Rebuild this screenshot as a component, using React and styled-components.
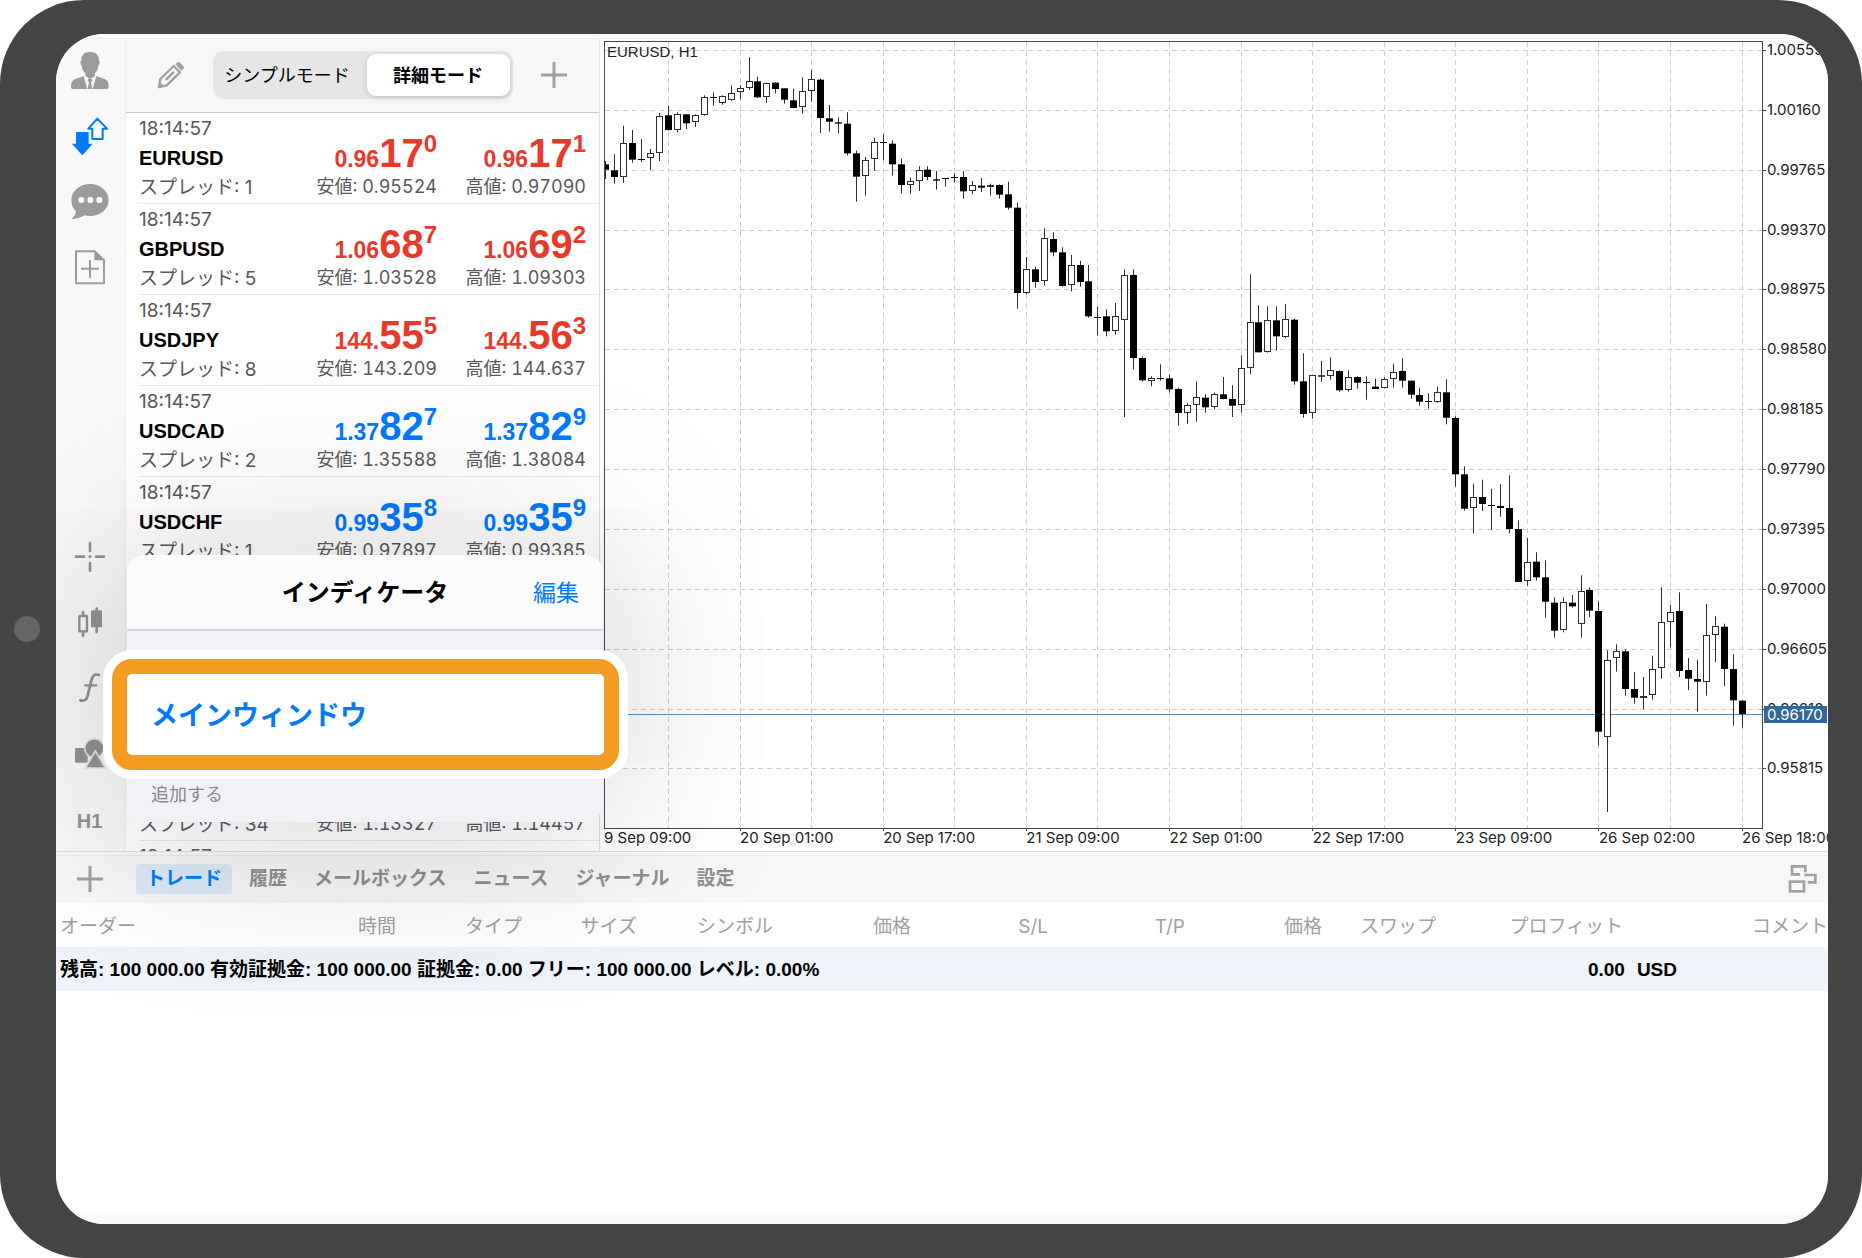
import React from "react";
import styled, { createGlobalStyle } from "styled-components";

const uiFont = `Inter, "Noto Sans CJK JP", sans-serif`;
const helvetica = `"Liberation Sans", "Noto Sans CJK JP", sans-serif`;
const gray = "#9b9b99";
const blue = "#007aff";
const red = "#e8392a";

const quotes = [
  { time: "18:14:57", symbol: "EURUSD", spread: "1", color: red, bid: ["0.96", "17", "0"], ask: ["0.96", "17", "1"], low: "0.95524", high: "0.97090" },
  { time: "18:14:57", symbol: "GBPUSD", spread: "5", color: red, bid: ["1.06", "68", "7"], ask: ["1.06", "69", "2"], low: "1.03528", high: "1.09303" },
  { time: "18:14:57", symbol: "USDJPY", spread: "8", color: red, bid: ["144.", "55", "5"], ask: ["144.", "56", "3"], low: "143.209", high: "144.637" },
  { time: "18:14:57", symbol: "USDCAD", spread: "2", color: blue, bid: ["1.37", "82", "7"], ask: ["1.37", "82", "9"], low: "1.35588", high: "1.38084" },
  { time: "18:14:57", symbol: "USDCHF", spread: "1", color: blue, bid: ["0.99", "35", "8"], ask: ["0.99", "35", "9"], low: "0.97897", high: "0.99385" },
  {},
  {},
  { spread: "34", low: "1.13327", high: "1.14457" },
  { time: "18:14:57" },
];

// high, body top, body bottom, low in thirds of a unit, then f = falling, h = rising, d = flat
const candles = `483 493 509 537 f|463 511 531 551 f|377 429 530 548 h|390 429 479 488 f|417 478 478 486 d|447 460 476 510 h
339 349 461 483 h|317 346 390 392 f|337 343 390 397 h|342 343 370 387 f|343 346 368 381 h|286 292 345 347 h
277 293 293 317 d|286 289 311 314 h|256 280 301 302 h|256 265 277 298 h|172 244 265 270 h|230 244 292 294 f
248 250 292 309 h|247 248 267 280 f|265 265 299 311 f|266 301 324 325 f|232 273 320 340 h|210 239 274 305 h
236 239 354 399 f|315 355 365 395 f|352 367 371 400 f|337 371 460 466 f|452 460 530 605 f|471 482 530 587 h
413 427 478 513 h|403 428 428 480 d|421 431 493 527 f|476 493 555 580 f|533 545 557 581 h|499 511 544 573 h
499 509 531 541 f|513 538 542 569 f|535 535 535 560 d|520 532 532 548 d|513 531 574 596 f|543 557 574 583 h
534 557 563 576 f|551 556 562 587 h|553 555 584 596 f|545 583 623 629 f|608 623 879 926 f|771 808 881 883 h
800 808 846 863 f|685 715 843 857 h|697 717 757 769 f|742 757 858 860 f|765 796 857 874 h|782 795 846 860 f
795 844 949 953 f|921 952 952 1007 d|928 949 994 1009 f|909 948 994 1004 h|808 826 962 1251 h|808 825 1074 1108 f
1070 1074 1141 1145 f|1129 1135 1145 1159 h|1093 1136 1136 1142 d|1124 1135 1168 1178 f|1163 1167 1239 1276 f|1210 1216 1240 1271 h
1144 1192 1217 1265 h|1183 1193 1222 1238 f|1178 1182 1222 1228 h|1131 1183 1197 1198 f|1156 1197 1217 1251 f|1066 1105 1217 1238 h
823 967 1106 1123 h|916 967 1057 1057 f|919 961 1057 1058 h|919 961 1009 1052 f|912 958 1013 1015 h|955 959 1144 1154 f
1060 1144 1242 1253 f|1124 1127 1242 1256 h|1083 1126 1130 1145 f|1072 1111 1130 1139 h|1111 1113 1171 1175 f|1111 1132 1171 1175 h
1128 1131 1148 1166 f|1129 1147 1147 1199 d|1136 1160 1167 1167 f|1132 1137 1163 1165 h|1091 1116 1137 1163 h|1075 1113 1142 1163 f
1142 1142 1184 1196 f|1163 1185 1205 1217 f|1180 1203 1206 1226 f|1160 1176 1206 1208 h|1138 1177 1253 1273 f|1249 1254 1423 1460 f
1399 1423 1526 1532 f|1451 1491 1523 1600 h|1439 1491 1512 1533 f|1466 1516 1516 1590 d|1452 1518 1524 1550 f|1426 1524 1587 1600 f
1561 1587 1746 1746 f|1614 1686 1742 1757 h|1657 1685 1732 1742 f|1681 1732 1805 1853 f|1792 1808 1892 1913 f|1792 1807 1892 1897 h
1785 1808 1819 1823 f|1726 1773 1871 1913 h|1762 1770 1832 1851 f|1804 1833 2195 2237 f|1951 1981 2213 2436 h|1933 1954 1976 2015 h
1948 1954 2067 2087 f|2016 2067 2093 2111 f|2031 2089 2093 2128 h|1967 2007 2085 2099 h|1762 1867 2004 2036 h|1815 1836 1865 1942 h
1777 1833 2013 2031 f|1974 2010 2036 2070 f|1979 2037 2045 2135 f|1812 1906 2048 2087 h|1849 1880 1907 1986 h|1871 1880 2007 2058 f
1963 2007 2101 2177 f|2101 2102 2142 2183 f`
  .split(/[|\n]/)
  .map((row) => {
    const [high, top, bottom, low, kind] = row.trim().split(" ");
    return { high: +high, top: +top, bottom: +bottom, low: +low, kind };
  });

const prices = ["1.00555", "1.00160", "0.99765", "0.99370", "0.98975", "0.98580", "0.98185", "0.97790", "0.97395", "0.97000", "0.96605", "0.96210", "0.95815"];
const times = ["20 Sep 01:00", "20 Sep 17:00", "21 Sep 09:00", "22 Sep 01:00", "22 Sep 17:00", "23 Sep 09:00", "26 Sep 02:00", "26 Sep 18:00"];

const candleX = (i) => 5.9 + i * 8.946;
const scaleY = (v) => (v - 117) / 3;
const gridY = (k) => Math.round(11 + k * 59.87) + 0.5;
const crisp = (v) => Math.round(v - 0.5) + 0.5;

const tabs = ["トレード", "履歴", "メールボックス", "ニュース", "ジャーナル", "設定"];
const columnWidths = [80, 260, 126, 115, 136, 138, 137, 137, 137, 114, 187, 205];
const columnNames = ["オーダー", "時間", "タイプ", "サイズ", "シンボル", "価格", "S/L", "T/P", "価格", "スワップ", "プロフィット", "コメント"];

function Chart() {
  return (
    <ChartSvg viewBox="0 0 1228 812" role="img" aria-label="EURUSD, H1">
      <defs>
        <clipPath id="plot">
          <rect x="5" y="3" width="1158" height="786" />
        </clipPath>
      </defs>
      <g stroke="#cfcfcf" strokeDasharray="5 4">
        {prices.map((p, k) => (
          <line key={p} x1="5" x2="1163" y1={gridY(k)} y2={gridY(k)} />
        ))}
        {Array.from({ length: 16 }, (_, n) => (
          <line key={n} y1="3" y2="789" x1={crisp(candleX(7 + n * 8))} x2={crisp(candleX(7 + n * 8))} />
        ))}
      </g>
      <line x1="5" x2="1163" y1="675.5" y2="675.5" stroke="#5b8dbb" />
      <g clipPath="url(#plot)">
        {candles.map((c, i) => {
          const x = crisp(candleX(i));
          const top = scaleY(c.top);
          const height = Math.max(scaleY(c.bottom) - top, 1);
          return (
            <g key={i}>
              <line x1={x} x2={x} y1={scaleY(c.high)} y2={scaleY(c.low)} stroke="#2e2e2e" />
              {c.kind === "h" && (
                <rect x={x - 3} y={crisp(top)} width="6" height={Math.max(Math.round(height - 1), 1)} fill="#fff" stroke="#2e2e2e" />
              )}
              {c.kind === "f" && <rect x={x - 3.5} y={top} width="7" height={height} />}
              {c.kind === "d" && <line x1={x - 3.5} x2={x + 3.5} y1={crisp(top)} y2={crisp(top)} stroke="#000" />}
            </g>
          );
        })}
      </g>
      <rect x="4.5" y="2.5" width="1158" height="787" fill="none" stroke="#4a4a4a" />
      {prices.map((p, k) => (
        <g key={p}>
          <line x1="1163" x2="1166" y1={gridY(k)} y2={gridY(k)} stroke="#4a4a4a" />
          <AxisText x="1167" y={gridY(k) + 4.5}>{p}</AxisText>
        </g>
      ))}
      <rect x="1164" y="667" width="63" height="17" fill="#336699" />
      <AxisText x="1167" y="681" $light>0.96170</AxisText>
      <AxisText x="4" y="804">9 Sep 09:00</AxisText>
      {times.map((t, n) => (
        <g key={t}>
          <line x1={crisp(candleX(15 + n * 16))} x2={crisp(candleX(15 + n * 16))} y1="789" y2="792" stroke="#4a4a4a" />
          <AxisText x={candleX(15 + n * 16)} y="804">{t}</AxisText>
        </g>
      ))}
      <ChartTitle x="7" y="18">EURUSD, H1</ChartTitle>
    </ChartSvg>
  );
}

function Price({ parts }) {
  return (
    <PriceLine>
      <Small>{parts[0]}</Small>
      <Big>{parts[1]}</Big>
      <Sup>{parts[2]}</Sup>
    </PriceLine>
  );
}

function Quote({ data }) {
  return (
    <QuoteRow>
      <QuoteCell>
        <Muted>{data.time}</Muted>
        <Symbol>{data.symbol}</Symbol>
        {data.spread && <Muted>スプレッド: {data.spread}</Muted>}
      </QuoteCell>
      <QuoteSide $color={data.color}>
        {data.bid && <Price parts={data.bid} />}
        {data.low && <Extreme>安値: {data.low}</Extreme>}
      </QuoteSide>
      <QuoteSide $color={data.color}>
        {data.ask && <Price parts={data.ask} />}
        {data.high && <Extreme>高値: {data.high}</Extreme>}
      </QuoteSide>
    </QuoteRow>
  );
}

function App() {
  return (
    <Device>
      <GlobalStyle />
      <Bezel>
        <Camera />
      </Bezel>
      <Screen>
        <TopStrip />
        <Workspace>
          <Sidebar>
            <IconGroup>
              <IconButton aria-label="アカウント">
                <Icon viewBox="0 0 120 120">
                  <path d="M60 6C42 6 34 15 34 32c-4 1-4 9 1 15 1 12 7 18 11 23v8l14 9 15-9v-8c4-5 9-11 10-23 5-6 5-14 2-15C87 15 78 6 60 6z" />
                  <path d="M42 78 14 88C6 92 3 100 3 112q0 5 5 5h44L42 82zM78 78l28 10c8 4 10 12 10 24q0 5-5 5H68l10-35z" />
                  <path d="M54 87h12l1 6-4 4 4 20H53l4-20-4-4z" />
                </Icon>
              </IconButton>
              <IconButton aria-label="気配値" $active>
                <Icon viewBox="0 0 120 120">
                  <path d="M18 50q0-2 2-2h34q2 0 2 2v33h12L40 115q-3 3-6 0L6 83h12z" />
                  <path d="M82 8 55 38h12v31h31V38h13z" fill="none" stroke="currentColor" strokeWidth="6" strokeLinejoin="round" />
                </Icon>
              </IconButton>
              <IconButton aria-label="チャット">
                <Icon viewBox="0 0 120 120">
                  <path d="M60 6c31 0 56 21 56 48s-25 48-56 48c-6 0-11-1-16-2-12 7-25 11-40 11 8-6 13-13 14-23C9 80 4 68 4 54 4 27 29 6 60 6z" />
                  <g fill="#fff">
                    <circle cx="34" cy="54" r="9" />
                    <circle cx="61" cy="54" r="9" />
                    <circle cx="88" cy="54" r="9" />
                  </g>
                </Icon>
              </IconButton>
              <IconButton aria-label="新規注文">
                <Icon viewBox="0 0 120 120">
                  <path d="M18 10h56l28 27v69H18z" fill="none" stroke="currentColor" strokeWidth="6" strokeLinejoin="round" />
                  <path d="M73 9v28h29z" />
                  <path d="M60 36v53M33 62h54" stroke="currentColor" strokeWidth="6" />
                </Icon>
              </IconButton>
            </IconGroup>
            <IconGroup>
              <IconButton aria-label="クロスヘア" $dark>
                <Icon viewBox="0 0 120 120">
                  <path d="M60 18v24M60 78v23M18 59h24M78 59h24M59 59h2" stroke="currentColor" strokeWidth="8" strokeLinecap="round" />
                </Icon>
              </IconButton>
              <IconButton aria-label="チャートの種類" $dark>
                <Icon viewBox="0 0 120 120">
                  <rect x="28" y="39" width="23" height="46" rx="1" fill="none" stroke="currentColor" strokeWidth="7" />
                  <path d="M39 27v10M39 87v12M80 17v70" stroke="currentColor" strokeWidth="8" strokeLinecap="round" />
                  <rect x="63" y="22" width="33" height="51" rx="4" />
                </Icon>
              </IconButton>
              <IconButton aria-label="インディケータ" $dark>
                <Icon viewBox="0 0 120 120">
                  <path d="M87 18c-14-5-20 3-23 16L53 80c-3 13-9 17-22 14" fill="none" stroke="currentColor" strokeWidth="8" strokeLinecap="round" />
                  <path d="M46 49h33" stroke="currentColor" strokeWidth="7" strokeLinecap="round" />
                </Icon>
              </IconButton>
              <IconButton aria-label="オブジェクト" $dark>
                <Icon viewBox="0 0 120 120">
                  <rect x="15" y="39" width="38" height="44" rx="4" />
                  <circle cx="73" cy="40" r="29" stroke="#e3e3e2" strokeWidth="5" />
                  <path d="M76 48 46 99h60z" stroke="#e3e3e2" strokeWidth="5" />
                </Icon>
              </IconButton>
              <IconButton $dark>
                <Period>H1</Period>
              </IconButton>
            </IconGroup>
          </Sidebar>
          <Watch>
            <WatchBar>
              <BarButton aria-label="編集">
                <PencilIcon viewBox="0 0 84 84">
                  <path d="M6 78 10 54 50 15l19 19-40 39z" fill="none" stroke="currentColor" strokeWidth="7" strokeLinejoin="round" />
                  <path d="M55 10 61 4q4-3 8 1l10 10q4 4 0 8l-5 6zM5 79l3-17 14 14zM24 54 48 30l5 5-24 24z" />
                </PencilIcon>
              </BarButton>
              <Segmented>
                <Segment>シンプルモード</Segment>
                <Segment $selected>詳細モード</Segment>
              </Segmented>
              <BarButton aria-label="追加">
                <PlusIcon viewBox="0 0 28 28">
                  <path d="M14 1v26M1 14h26" stroke="currentColor" strokeWidth="3" />
                </PlusIcon>
              </BarButton>
            </WatchBar>
            <QuoteList>
              {quotes.map((q, i) => (
                <Quote key={i} data={q} />
              ))}
            </QuoteList>
          </Watch>
          <Chart />
        </Workspace>
        <Divider />
        <TabBar>
          <TabPlus aria-label="新規">
            <PlusIcon viewBox="0 0 28 28">
              <path d="M14 1v26M1 14h26" stroke="currentColor" strokeWidth="3" />
            </PlusIcon>
          </TabPlus>
          <Tabs>
            {tabs.map((t, i) => (
              <Tab key={t} $active={i === 0}>{t}</Tab>
            ))}
          </Tabs>
          <BarButton aria-label="ウィンドウ">
            <DetachIcon viewBox="0 0 88 84">
              <path d="M35 28H11V4h40v18M48 30h33v22H58" />
              <rect x="5" y="50" width="42" height="29" />
            </DetachIcon>
          </BarButton>
        </TabBar>
        <TradeTable>
          <colgroup>
            {columnWidths.map((w, i) => (
              <col key={i} width={w} />
            ))}
          </colgroup>
          <thead>
            <tr>
              {columnNames.map((name, i) => (
                <HeadCell key={i} $left={i === 0}>{name}</HeadCell>
              ))}
            </tr>
          </thead>
          <tbody>
            <BalanceRow>
              <BalanceCell colSpan={10}>
                残高: 100 000.00 有効証拠金: 100 000.00 証拠金: 0.00 フリー: 100 000.00 レベル: 0.00%
              </BalanceCell>
              <ProfitCell colSpan={2}>
                <Profit>
                  <span>0.00</span>
                  <span>USD</span>
                </Profit>
              </ProfitCell>
            </BalanceRow>
          </tbody>
        </TradeTable>
        <BottomStrip />
        <Popover>
          <PopoverHeader>
            <PopoverTitle>インディケータ</PopoverTitle>
            <EditButton>編集</EditButton>
          </PopoverHeader>
          <MainWindow>メインウィンドウ</MainWindow>
          <Hint>追加する</Hint>
        </Popover>
      </Screen>
    </Device>
  );
}

const GlobalStyle = createGlobalStyle`
  * {
    box-sizing: border-box;
  }
  body {
    margin: 0;
    background: #fff;
    font-family: ${uiFont};
  }
  button {
    border: 0;
    padding: 0;
    background: none;
    font-family: inherit;
    cursor: pointer;
  }
`;

const Device = styled.div`
  display: flex;
  min-height: 100vh;
  padding: 34px 34px 34px 0;
  border-radius: 84px;
  background: #444;
`;

const Bezel = styled.div`
  display: flex;
  flex: none;
  width: 56px;
  align-items: center;
  justify-content: center;
  padding-right: 2px;
`;

const Camera = styled.div`
  width: 26px;
  height: 26px;
  border-radius: 50%;
  background: #666667;
`;

const Screen = styled.main`
  position: relative;
  display: flex;
  flex: 1;
  flex-direction: column;
  min-width: 0;
  overflow: hidden;
  border-radius: 48px;
  background: #fff;
`;

const TopStrip = styled.div`
  height: 5px;
  border-bottom: 1px solid #ededed;
  background: #fafafa;
`;

const Workspace = styled.div`
  display: grid;
  grid-template-columns: 70px 474px minmax(0, 1fr);
`;

const Sidebar = styled.nav`
  display: flex;
  flex-direction: column;
  justify-content: space-between;
  padding: 11px 2px 10px 0;
  border-right: 1px solid #ececec;
  background: #f8f8f8;
`;

const IconGroup = styled.div`
  display: flex;
  flex-direction: column;
  align-items: center;
  gap: 26px;
`;

const IconButton = styled.button`
  display: flex;
  width: 40px;
  height: 40px;
  align-items: center;
  justify-content: center;
  color: ${(p) => (p.$active ? blue : p.$dark ? "#929290" : gray)};
`;

const Icon = styled.svg`
  width: 40px;
  height: 40px;
  fill: currentColor;
`;

const Period = styled.span`
  font: bold 20px/38px ${helvetica};
`;

const Watch = styled.section`
  display: flex;
  flex-direction: column;
  height: 0;
  min-height: 100%;
  overflow: hidden;
  border-right: 1px solid #e0e0e0;
  background: #fff;
`;

const WatchBar = styled.div`
  display: flex;
  flex: none;
  height: 74px;
  align-items: center;
  justify-content: space-between;
  padding: 0 31px 2px;
  border-bottom: 1px solid #c8c8ca;
  background: #f7f7f7;
`;

const BarButton = styled.button`
  display: flex;
  color: #a0a0a0;
`;

const PencilIcon = styled.svg`
  width: 28px;
  height: 28px;
  fill: currentColor;
`;

const PlusIcon = styled.svg`
  width: 28px;
  height: 28px;
`;

const DetachIcon = styled.svg`
  width: 30px;
  height: 28px;
  fill: none;
  stroke: currentColor;
  stroke-width: 8;
`;

const Segmented = styled.div`
  display: flex;
  height: 48px;
  padding: 3px;
  border-radius: 11px;
  background: #e6e6e6;
`;

const Segment = styled.button`
  width: ${(p) => (p.$selected ? 143 : 151)}px;
  padding: ${(p) => (p.$selected ? "0 0 2px" : "0 8px 2px 0")};
  border-radius: 9px;
  background: ${(p) => (p.$selected ? "#fff" : "none")};
  box-shadow: ${(p) => (p.$selected ? "0 2px 6px rgba(0, 0, 0, 0.14)" : "none")};
  color: #000;
  font-size: 18px;
  font-weight: ${(p) => (p.$selected ? 700 : 400)};
  white-space: nowrap;
`;

const QuoteList = styled.div`
  flex: 1;
  min-height: 0;
  overflow: hidden;
  padding-left: 13px;
`;

const QuoteRow = styled.div`
  display: grid;
  grid-template-columns: minmax(0, 1fr) 149px 149px;
  height: 91px;
  padding-right: 13px;
  border-bottom: 1px solid #e9e9ea;
`;

const QuoteCell = styled.div`
  display: grid;
  grid-template-rows: 32px 27px 31px;
`;

const QuoteSide = styled.div`
  display: grid;
  grid-template-rows: 59px 31px;
  justify-items: end;
  color: ${(p) => p.$color};
`;

const Muted = styled.div`
  color: #58585a;
  font-size: 19px;
  line-height: 32px;
  white-space: nowrap;
`;

const Extreme = styled(Muted)`
  grid-row: 2;
  font-size: 18px;
  line-height: 30px;
  font-variant-numeric: tabular-nums;
`;

const Symbol = styled.div`
  color: #000;
  font: bold 20px/27px ${helvetica};
`;

const PriceLine = styled.div`
  display: flex;
  align-items: baseline;
  padding-top: 19px;
  font-family: ${helvetica};
  font-weight: bold;
`;

const Small = styled.span`
  font-size: 23px;
`;

const Big = styled.span`
  font-size: 40px;
  line-height: 42px;
`;

const Sup = styled.span`
  align-self: flex-start;
  font-size: 24px;
  line-height: 24px;
`;

const ChartSvg = styled.svg`
  display: block;
  width: 100%;
  height: auto;
  background: #fff;
`;

const AxisText = styled.text`
  fill: ${(p) => (p.$light ? "#fff" : "#222")};
  font: 15px ${uiFont};
`;

const ChartTitle = styled.text`
  fill: #222;
  font: 15px "Liberation Sans", sans-serif;
`;

const Divider = styled.div`
  height: 5px;
  border-top: 1px solid #e2e2e2;
  border-bottom: 1px solid #ececec;
  background: #fafafa;
`;

const TabBar = styled.div`
  display: flex;
  height: 47px;
  align-items: center;
  padding: 0 10px 1px 20px;
  background: #f7f7f7;
`;

const TabPlus = styled(BarButton)`
  margin-right: 32px;
`;

const Tabs = styled.div`
  display: flex;
  flex: 1;
  gap: 7px;
`;

const Tab = styled.button`
  height: 30px;
  padding: 0 10px;
  border-radius: 4px;
  background: ${(p) => (p.$active ? "#dbe9f8" : "none")};
  color: ${(p) => (p.$active ? blue : "#8f8f8f")};
  font-size: 19px;
  font-weight: 700;
  line-height: 30px;
`;

const TradeTable = styled.table`
  width: 100%;
  table-layout: fixed;
  border-collapse: collapse;
`;

const HeadCell = styled.th`
  height: 44px;
  padding: 3px 0 0 4px;
  color: #a0a0a2;
  font-size: 19px;
  font-weight: 400;
  line-height: 28px;
  text-align: ${(p) => (p.$left ? "left" : "right")};
  white-space: nowrap;
`;

const BalanceRow = styled.tr`
  background: #eef4f9;
`;

const BalanceCell = styled.td`
  height: 44px;
  padding: 2px 0 0 4px;
  font: bold 19px/28px ${helvetica};
  white-space: nowrap;
`;

const ProfitCell = styled(BalanceCell)`
  padding: 2px 151px 0 0;
`;

const Profit = styled.div`
  display: flex;
  justify-content: flex-end;
  gap: 12px;
`;

const BottomStrip = styled.div`
  height: 9px;
  margin-top: auto;
  background: #f8f8f8;
`;

const Popover = styled.section`
  position: absolute;
  top: 521px;
  left: 71px;
  width: 476px;
  border-radius: 18px;
  background: #f2f1f7;
  box-shadow: 0 0 200px rgba(0, 0, 0, 0.22);
`;

const PopoverHeader = styled.header`
  display: grid;
  grid-template-columns: 1fr auto 1fr;
  height: 76px;
  align-items: center;
  margin-bottom: 28px;
  padding: 0 24px 3px;
  border-bottom: 2px solid #d6d6d9;
  border-radius: 18px 18px 0 0;
  background: #fbfbfc;
`;

const PopoverTitle = styled.h2`
  grid-column: 2;
  margin: 0;
  font-size: 24px;
  font-weight: 700;
`;

const EditButton = styled.button`
  justify-self: end;
  color: ${blue};
  font-size: 23px;
`;

const MainWindow = styled.button`
  display: block;
  width: 507px;
  height: 111px;
  margin: 0 -15px;
  padding: 0 24px 2px;
  border: 15px solid #f49b22;
  border-radius: 20px;
  background: #fff;
  box-shadow: 0 0 0 9px #fff;
  color: ${blue};
  font-size: 27px;
  font-weight: 700;
  text-align: left;
`;

const Hint = styled.p`
  margin: 0;
  padding: 10px 24px 12px;
  color: #87878b;
  font-size: 18px;
  line-height: 30px;
`;

export default App;
